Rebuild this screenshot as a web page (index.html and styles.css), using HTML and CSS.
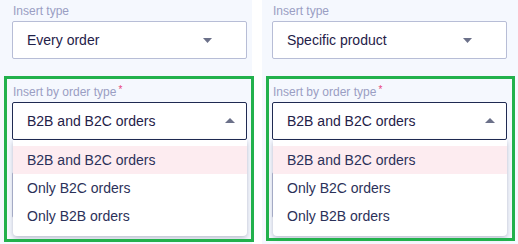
FILE: index.html
```html
<!DOCTYPE html>
<html>
<head>
<meta charset="utf-8">
<link rel="stylesheet" href="styles.css">
</head>
<body>
<div class="page">
  <section class="panel panel-left">
    <div class="field">
      <div class="label">Insert type</div>
      <div class="select">
        <span class="value">Every order</span>
        <svg class="caret caret-down" width="9" height="5" viewBox="0 0 9 5"><path d="M0 0h9L4.5 5z" fill="#6b7089"/></svg>
      </div>
    </div>
    <div class="field field-open">
      <div class="label">Insert by order type<span class="req">*</span></div>
      <div class="select select-active">
        <span class="value">B2B and B2C orders</span>
        <svg class="caret caret-up" width="10" height="5" viewBox="0 0 10 5"><path d="M0 5h10L5 0z" fill="#6b7089"/></svg>
        <ul class="menu">
          <li class="option option-selected">B2B and B2C orders</li>
          <li class="option">Only B2C orders</li>
          <li class="option">Only B2B orders</li>
        </ul>
      </div>
    </div>
    <div class="under-box"></div>
  </section>
  <section class="panel panel-right">
    <div class="field">
      <div class="label">Insert type</div>
      <div class="select">
        <span class="value">Specific product</span>
        <svg class="caret caret-down" width="9" height="5" viewBox="0 0 9 5"><path d="M0 0h9L4.5 5z" fill="#6b7089"/></svg>
      </div>
    </div>
    <div class="field field-open">
      <div class="label">Insert by order type<span class="req">*</span></div>
      <div class="select select-active">
        <span class="value">B2B and B2C orders</span>
        <svg class="caret caret-up" width="10" height="5" viewBox="0 0 10 5"><path d="M0 5h10L5 0z" fill="#6b7089"/></svg>
        <ul class="menu">
          <li class="option option-selected">B2B and B2C orders</li>
          <li class="option">Only B2C orders</li>
          <li class="option">Only B2B orders</li>
        </ul>
      </div>
    </div>
    <div class="under-box"></div>
    <div class="under-row"><span>Amazon.de (10+)</span><span>Specific product</span></div>
  </section>
  <div class="mark mark-left"></div>
  <div class="mark mark-right"></div>
</div>
</body>
</html>
```

FILE: styles.css
```css
html, body {
  margin: 0;
  padding: 0;
  background: #ffffff;
  font-family: "Liberation Sans", Arial, sans-serif;
}

.page {
  position: relative;
  display: flex;
  gap: 10px;
  width: 518px;
  height: 244px;
  overflow: hidden;
}

.panel {
  background: #f5f8fe;
  padding-top: 3px;
  box-sizing: border-box;
  height: 244px;
}

.panel-left {
  width: 252px;
  padding-left: 12px;
}

.panel-right {
  width: 256px;
  padding-left: 10px;
}

.field {
  width: 235px;
}

.field + .field {
  margin-top: 23px;
}

.label {
  font-size: 12px;
  line-height: 16px;
  color: #9a9ec3;
  padding-left: 1px;
  margin-bottom: 2px;
}

.req {
  color: #e8467c;
  font-size: 10px;
  vertical-align: 3px;
  margin-left: 2px;
}

.select {
  position: relative;
  box-sizing: border-box;
  height: 38px;
  border: 1px solid #b7bdd6;
  border-radius: 2px;
  background: #ffffff;
  display: flex;
  align-items: center;
  padding-left: 14px;
}

.select-active {
  border-color: #1f2a52;
}

.value {
  font-size: 14px;
  color: #1f2148;
  flex: 1;
}

.caret-down {
  margin-right: 34px;
  margin-top: 1px;
}

.caret-up {
  margin-right: 11px;
  margin-top: -1px;
}

.menu {
  position: absolute;
  left: 0;
  top: calc(100% + 1px);
  width: 234px;
  margin: 0;
  padding: 6px 0;
  list-style: none;
  background: #ffffff;
  border-radius: 0 0 4px 4px;
  box-shadow: 0 2px 5px rgba(30, 40, 80, 0.28);
  z-index: 2;
}

.option {
  height: 28px;
  line-height: 28px;
  padding-left: 14px;
  font-size: 14px;
  color: #2b3159;
}

.option-selected {
  background: #fdecf0;
}

.under-box {
  width: 235px;
  height: 46px;
  box-sizing: border-box;
  margin-top: 32px;
  border: 1px solid #b7bdd6;
  border-radius: 2px;
  background: #ffffff;
}

.under-row {
  display: flex;
  gap: 34px;
  margin-top: 24px;
  padding-left: 3px;
  font-size: 12px;
  line-height: 16px;
  color: #7e84a6;
}

.mark {
  position: absolute;
  top: 76px;
  height: 166px;
  box-sizing: border-box;
  border: 3px solid #22b14c;
  z-index: 5;
  pointer-events: none;
}

.mark-left {
  left: 4px;
  width: 250px;
}

.mark-right {
  left: 266px;
  width: 249px;
  height: 165px;
}
```
